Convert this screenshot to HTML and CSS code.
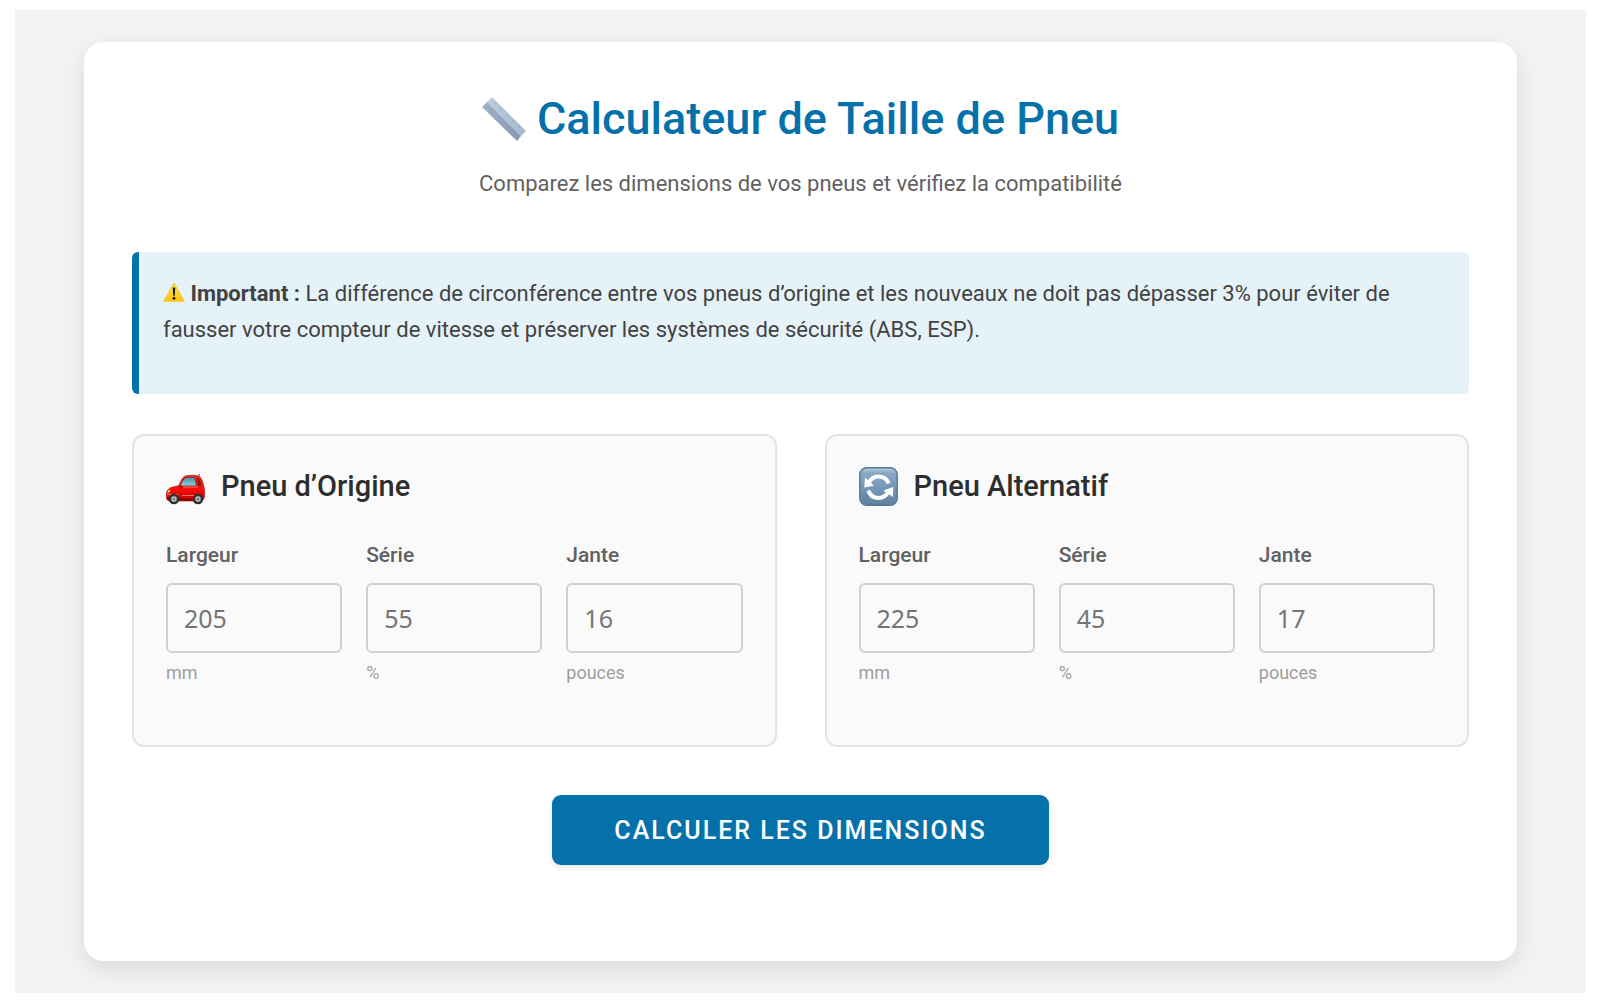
FILE: index.html
```html
<!DOCTYPE html>
<html lang="fr">
<head>
<meta charset="utf-8">
<meta name="viewport" content="width=device-width, initial-scale=1">
<title>Calculateur de Taille de Pneu</title>
<link rel="stylesheet" href="styles.css">
</head>
<body>
<main class="page">
  <form class="card">
    <header class="header">
      <h1 class="title">
        <svg class="title-icon" viewBox="0 0 44 44" aria-hidden="true">
          <defs>
            <linearGradient id="ruler-top" x1="0" y1="0" x2="1" y2="1"><stop offset="0" stop-color="#bccfdf"/><stop offset="1" stop-color="#a3b6cb"/></linearGradient>
            <linearGradient id="ruler-side" x1="0" y1="0" x2="1" y2="1"><stop offset="0" stop-color="#9fb2c5"/><stop offset="1" stop-color="#8798b3"/></linearGradient>
          </defs>
          <path d="M10 0 44 34 39 39 5 5Z" fill="url(#ruler-top)"/>
          <path d="M5 5 39 39 35 44 0 10Z" fill="url(#ruler-side)"/>
          <path d="M5 5 39 39" stroke="#b3c4d4" stroke-width="1"/>
          <path d="M14 5l-2 2M20 11l-3 3M26 17l-2 2M32 23l-3 3M38 29l-2 2" stroke="#93a9be" stroke-width="1"/>
        </svg>
        Calculateur de Taille de Pneu
      </h1>
      <p class="subtitle">Comparez les dimensions de vos pneus et vérifiez la compatibilité</p>
    </header>

    <div class="notice">
      <p class="notice-text"><svg class="notice-icon" viewBox="0 0 22 20" aria-hidden="true"><defs><linearGradient id="warn" x1="0" y1="0" x2="0" y2="1"><stop offset="0" stop-color="#ffe04a"/><stop offset="1" stop-color="#fcc40f"/></linearGradient></defs><path d="M11 1 21.3 19.300H.7Z" fill="url(#warn)" stroke="#f7c21c" stroke-width=".8" stroke-linejoin="round"/><path d="M9.800 5.500h2.400l-.5 8.200h-1.400Z" fill="#16140c"/><circle cx="11" cy="16.300" r="1.400" fill="#16140c"/></svg> <strong>Important :</strong> La différence de circonférence entre vos pneus d’origine et les nouveaux ne doit pas dépasser 3% pour éviter de fausser votre compteur de vitesse et préserver les systèmes de sécurité (ABS, ESP).</p>
    </div>

    <div class="panels">
      <section class="panel">
        <h2 class="panel-title">
          <svg class="panel-icon" viewBox="0 0 39 39" aria-hidden="true">
            <defs>
              <linearGradient id="car-body" x1="0" y1="0" x2="0" y2="1"><stop offset="0" stop-color="#ff2a1c"/><stop offset=".6" stop-color="#f30d0a"/><stop offset="1" stop-color="#b90504"/></linearGradient>
              <linearGradient id="car-glass" x1="0" y1="0" x2="0" y2="1"><stop offset="0" stop-color="#4a8b9d"/><stop offset="1" stop-color="#8fd3e3"/></linearGradient>
            </defs>
            <path d="M32 10.500 33.600 7" stroke="#555" stroke-width="1"/>
            <path d="M13 18.500C15 13 17 9.500 20 8.800 24 8 30 8 33 9.300 35.500 10.500 37 15 37.800 19 38.800 23 39 27 38.300 31L36 34H4C1 33.500 0 32 .3 28 .5 23.500 2 21.500 6 20.200Z" fill="url(#car-body)" stroke="#a30b08" stroke-width=".6"/>
            <path d="M14 19C16 14 18 11 20.500 10.500 24 9.900 27 10 29 10.400L30.500 19Z" fill="url(#car-glass)" stroke="#8a1712" stroke-width=".8"/>
            <path d="M31 10.500C33.500 11 35 15 35.600 19H32Z" fill="#8d1713"/>
            <path d="M17 20h15M1 27.500h11M16 28.500h13" stroke="#ff7362" stroke-width="1"/>
            <ellipse cx="15" cy="20" rx="2" ry="1.500" fill="#c50b08"/>
            <path d="M1 25.500 3 22.600 4.300 23.500 3 25.800Z" fill="#ffd7a0"/>
            <path d="M1 31.500h3M13 32.500h13" stroke="#7d0503" stroke-width="2"/>
            <g fill="#2c2b2c"><circle cx="8" cy="32" r="5.300"/><circle cx="32" cy="32" r="5.300"/></g>
            <g fill="#c0bebd" stroke="#777" stroke-width=".8"><circle cx="8" cy="32" r="2.900"/><circle cx="32" cy="32" r="2.900"/></g>
            <g fill="#555"><circle cx="8" cy="32" r="1"/><circle cx="32" cy="32" r="1"/></g>
          </svg>
          Pneu d’Origine
        </h2>
        <div class="fields">
          <div class="field">
            <label class="label" for="width-1">Largeur</label>
            <input class="input" id="width-1" type="text" inputmode="numeric" placeholder="205">
            <small class="unit">mm</small>
          </div>
          <div class="field">
            <label class="label" for="ratio-1">Série</label>
            <input class="input" id="ratio-1" type="text" inputmode="numeric" placeholder="55">
            <small class="unit">%</small>
          </div>
          <div class="field">
            <label class="label" for="rim-1">Jante</label>
            <input class="input" id="rim-1" type="text" inputmode="numeric" placeholder="16">
            <small class="unit">pouces</small>
          </div>
        </div>
      </section>

      <section class="panel">
        <h2 class="panel-title">
          <svg class="panel-icon" viewBox="0 0 39 39" aria-hidden="true">
            <defs>
              <linearGradient id="swap" x1="0" y1="0" x2="0" y2="1"><stop offset="0" stop-color="#b5cbdc"/><stop offset=".15" stop-color="#87a7c5"/><stop offset=".55" stop-color="#7496b8"/><stop offset="1" stop-color="#5f7f9f"/></linearGradient>
            </defs>
            <rect x=".8" y=".8" width="37.400" height="37.400" rx="7" fill="url(#swap)" stroke="#587796" stroke-width="1.400"/>
            <g fill="none" stroke="#fff" stroke-width="4">
              <path d="M9.500 16.500C12 11 16 9.300 20 9.500 25 9.700 28 12 29.700 16.500"/>
              <path d="M9.300 23.500C11 28.500 15 31 19.500 31 24 31 27.500 28.500 30 24"/>
            </g>
            <path d="M6 10.500 5.300 20.500 15 18.700Z" fill="#fff"/>
            <path d="M34.300 20 24.300 23.500 34 30Z" fill="#fff"/>
          </svg>
          Pneu Alternatif
        </h2>
        <div class="fields">
          <div class="field">
            <label class="label" for="width-2">Largeur</label>
            <input class="input" id="width-2" type="text" inputmode="numeric" placeholder="225">
            <small class="unit">mm</small>
          </div>
          <div class="field">
            <label class="label" for="ratio-2">Série</label>
            <input class="input" id="ratio-2" type="text" inputmode="numeric" placeholder="45">
            <small class="unit">%</small>
          </div>
          <div class="field">
            <label class="label" for="rim-2">Jante</label>
            <input class="input" id="rim-2" type="text" inputmode="numeric" placeholder="17">
            <small class="unit">pouces</small>
          </div>
        </div>
      </section>
    </div>

    <button class="submit" type="button">Calculer les dimensions</button>
  </form>
</main>
</body>
</html>
```
FILE: styles.css
```css
* {
  box-sizing: border-box;
}

body {
  margin: 0;
  padding: 10px 14px 10px 15px;
  background: #fff;
  color: #424242;
  font-family: Roboto, "Liberation Sans", sans-serif;
  font-size: 22px;
  line-height: 36px;
}

h1,
h2,
p {
  margin: 0;
}

.page {
  padding: 32px 69px;
  background: #f3f3f3;
}

.card {
  display: flex;
  flex-direction: column;
  padding: 48px 48px 96px;
  border-radius: 20px;
  background: #fff;
  box-shadow: 0 8px 24px rgba(0, 0, 0, 0.1);
}

.header {
  margin-bottom: 50px;
  text-align: center;
}

.title {
  display: flex;
  align-items: center;
  justify-content: center;
  gap: 11px;
  margin-bottom: 18px;
  color: #0571ab;
  font-size: 45px;
  font-weight: 500;
  line-height: 58px;
}

.title-icon {
  width: 44px;
  height: 44px;
}

.subtitle {
  color: #616161;
  font-size: 22px;
}

.notice {
  margin-bottom: 40px;
  padding: 24px 24px 46px;
  border-left: 7px solid #0571ab;
  border-radius: 6px;
  background: #e5f2f8;
}

.notice-icon {
  width: 22px;
  height: 20px;
  vertical-align: -1px;
}

.panels {
  display: grid;
  grid-template-columns: 1fr 1fr;
  gap: 48px;
  margin-bottom: 48px;
}

.panel {
  padding: 30px 32px 58px;
  border: 2px solid #e4e4e4;
  border-radius: 12px;
  background: #fafafa;
}

.panel-title {
  display: flex;
  align-items: center;
  gap: 16px;
  margin-bottom: 33px;
  color: #2e2e2e;
  font-size: 29px;
  font-weight: 500;
  line-height: 40px;
}

.panel-icon {
  width: 39px;
  height: 39px;
}

.fields {
  display: grid;
  grid-template-columns: repeat(3, 1fr);
  gap: 24px;
}

.field {
  display: flex;
  flex-direction: column;
}

.label {
  margin-bottom: 12px;
  color: #616161;
  font-size: 21px;
  font-weight: 500;
  line-height: 32px;
}

.input {
  width: 100%;
  height: 70px;
  padding: 0 16px;
  border: 2px solid #d0d0d0;
  border-radius: 6px;
  background: #fafafa;
  color: #424242;
  font-family: "Noto Sans", sans-serif;
  font-size: 25px;
}

.input::placeholder {
  color: #757575;
}

.unit {
  margin-top: 6px;
  color: #9e9e9e;
  font-size: 18px;
  line-height: 28px;
}

.submit {
  align-self: center;
  height: 70px;
  padding: 0 62px;
  border: 0;
  border-radius: 9px;
  background: #0571ab;
  box-shadow: 0 3px 6px rgba(0, 0, 0, 0.1);
  color: #fff;
  font-family: inherit;
  font-size: 25px;
  font-weight: 500;
  letter-spacing: 2px;
  text-transform: uppercase;
}

@media (max-width: 1000px) {
  .page {
    padding: 24px;
  }

  .panels {
    grid-template-columns: 1fr;
  }
}
```
